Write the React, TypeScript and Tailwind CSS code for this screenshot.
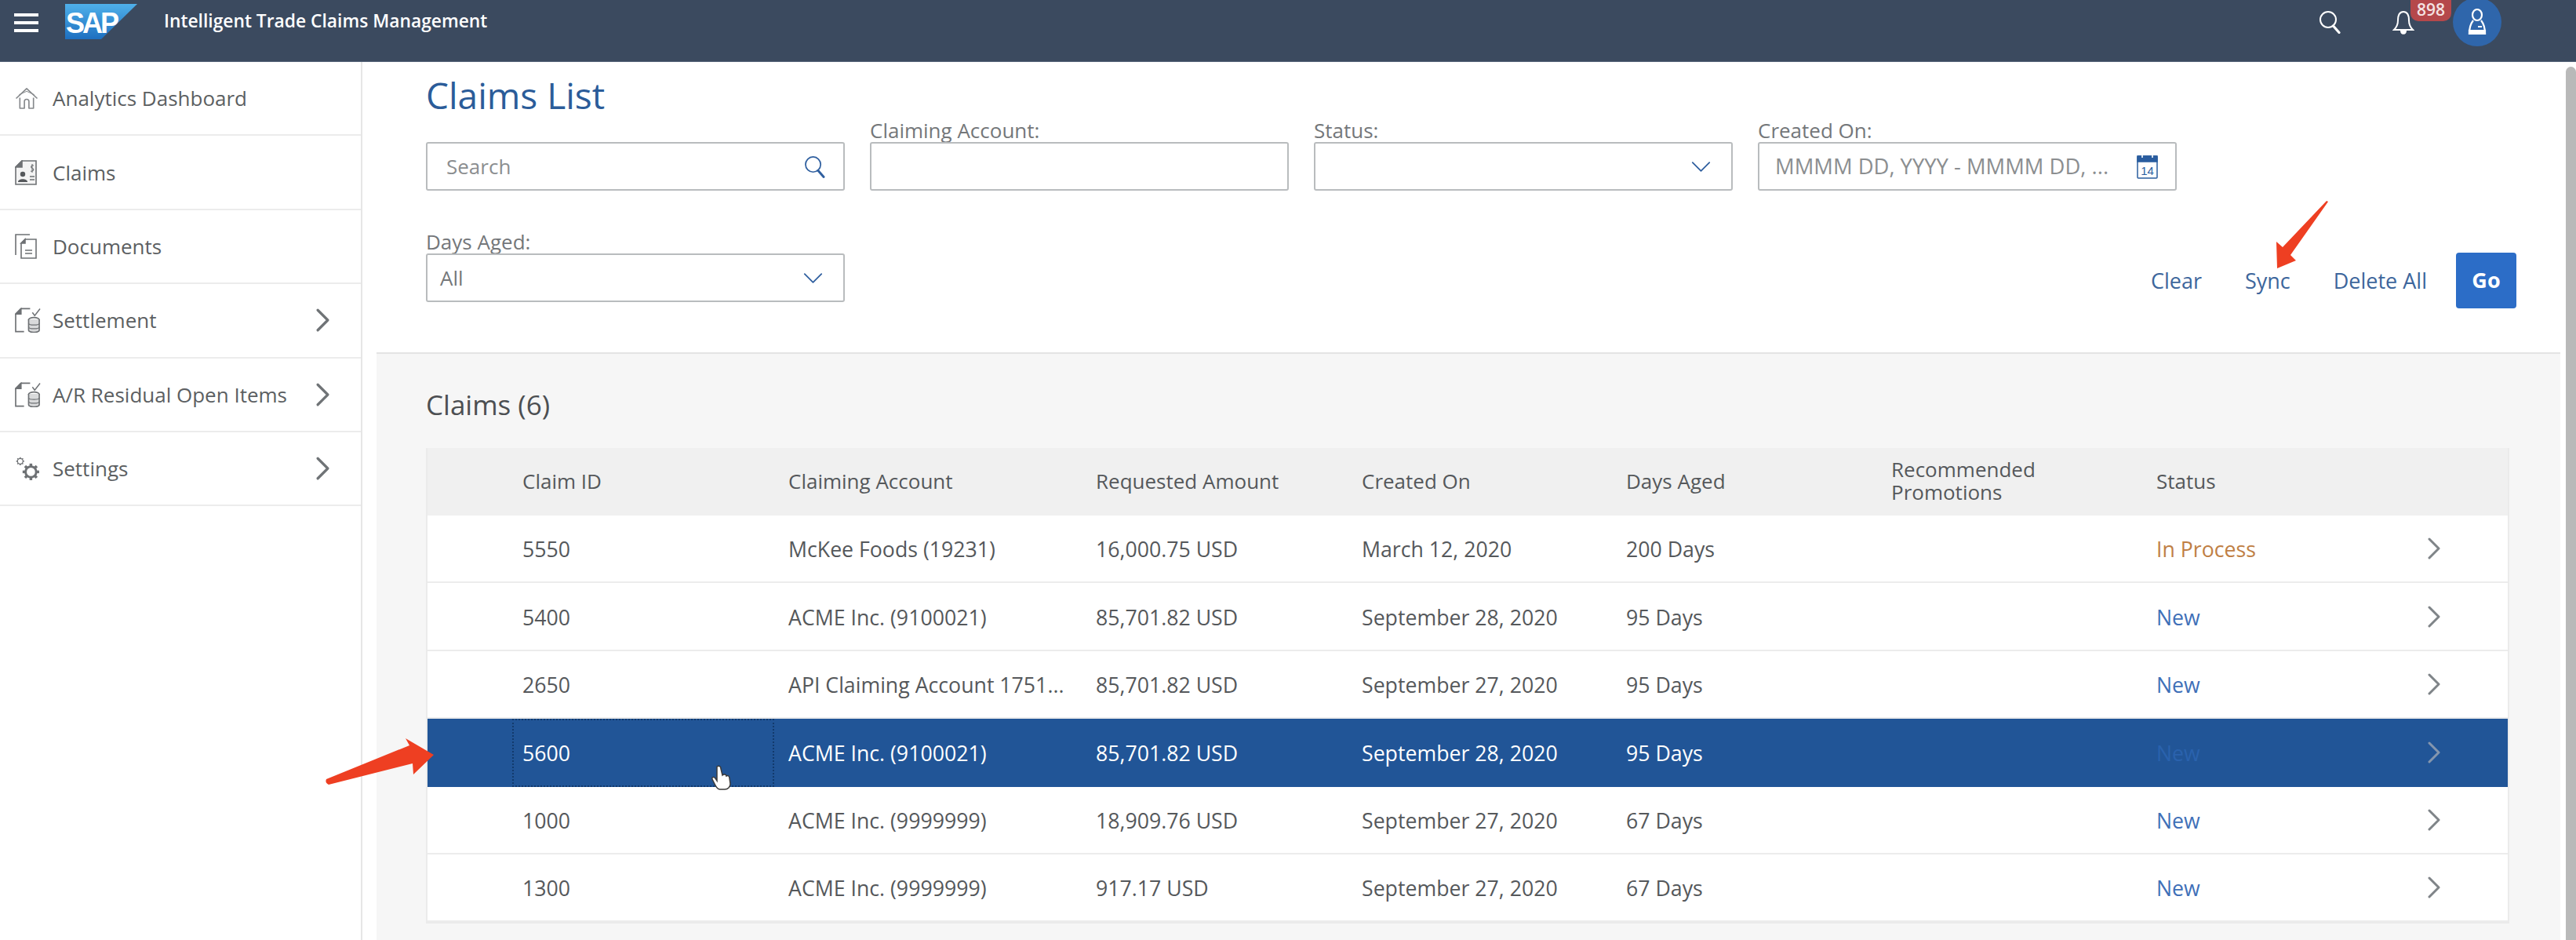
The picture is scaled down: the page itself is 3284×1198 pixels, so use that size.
import React from "react";

const Chevron = ({ className = "", color = "#6f7376" }: { className?: string; color?: string }) => (
  <svg viewBox="0 0 16 28" className={className} fill="none" stroke={color} strokeWidth="3" strokeLinecap="round" strokeLinejoin="round">
    <path d="M2 2 L14 14 L2 26" />
  </svg>
);

const Down = () => (
  <svg viewBox="0 0 28 16" className="w-[25px] h-[15px]" fill="none" stroke="#2f5f9f" strokeWidth="2" strokeLinecap="round" strokeLinejoin="round">
    <path d="M2 2 L14 14 L26 2" />
  </svg>
);

const HomeIcon = () => (
  <svg viewBox="0 0 30 28" className="w-[30px] h-[27px]" fill="none" stroke="#85888b" strokeWidth="1.700" strokeLinejoin="round">
    <path d="M1 14 L15 1 L29 14" />
    <path d="M5 9 L15 4.500 L25 9" strokeWidth="1" />
    <path d="M6 13 V27 H12 V18 A3 3 0 0 1 18 18 V27 H24 V13" />
  </svg>
);

const ClaimsIcon = () => (
  <svg viewBox="0 0 28 32" className="w-[28px] h-[32px]" fill="none" stroke="#6e7174" strokeWidth="1.600">
    <path d="M9 1 H27 V31 H1 V9 Z" fill="#f3f3f3" />
    <path d="M9 1 V9 H1 Z" fill="#6e7174" />
    <circle cx="10" cy="18" r="3.200" fill="#55585b" stroke="none" />
    <path d="M4 28 C4 23 16 23 16 28 Z" fill="#55585b" stroke="none" />
    <path d="M19 21 H25 M19 25 H25" strokeWidth="1.300" />
    <path d="M24 7 C20 6 20 10 22 10.500 C25 11 24 15 20 14 M22 5 V16" strokeWidth="1.100" />
  </svg>
);

const DocsIcon = () => (
  <svg viewBox="0 0 28 32" className="w-[28px] h-[32px]" fill="none" stroke="#6e7174" strokeWidth="1.600">
    <path d="M1 27 V1 H19" />
    <path d="M13 7 H27 V31 H8 V12 Z" fill="#fff" />
    <path d="M13 7 V12 H8 Z" fill="#6e7174" />
    <path d="M13 21 H22 M13 25 H22" strokeWidth="1.300" />
  </svg>
);

const SettleIcon = () => (
  <svg viewBox="0 0 34 32" className="w-[33px] h-[32px]" fill="none" stroke="#6e7174" strokeWidth="1.700">
    <path d="M8 1 H20 M8 1 L1 8 V31 H12" />
    <path d="M8 1 V8 H1 Z" fill="#6e7174" />
    <path d="M23 6 L26 10 L33 1" strokeWidth="1.500" />
    <ellipse cx="25" cy="15.500" rx="7" ry="3" fill="#fff" />
    <path d="M18 15 V29 C18 33 32 33 32 29 V15" fill="#d9dadb" />
    <path d="M18 20 C18 23 32 23 32 20 M18 25 C18 28 32 28 32 25" strokeWidth="1.300" />
  </svg>
);

const Gear = ({ cx, cy, r, w }: { cx: number; cy: number; r: number; w: number }) => (
  <g>
    <circle cx={cx} cy={cy} r={r} strokeWidth={w} />
    {[0, 45, 90, 135, 180, 225, 270, 315].map((a) => (
      <path
        key={a}
        d={`M${cx} ${cy - r} V${cy - r - w * 1.300}`}
        strokeWidth={w * 1.200}
        transform={`rotate(${a} ${cx} ${cy})`}
      />
    ))}
  </g>
);

const GearsIcon = () => (
  <svg viewBox="0 0 34 34" className="w-[33px] h-[33px]" fill="none" stroke="#6e7174">
    <Gear cx={7} cy={7} r={3.600} w={1.300} />
    <Gear cx={21} cy={21} r={7} w={3} />
  </svg>
);

const SearchGlyph = ({ className, color, w = 2 }: { className: string; color: string; w?: number }) => (
  <svg viewBox="0 0 28 30" className={className} fill="none" stroke={color} strokeWidth={w} strokeLinecap="round">
    <circle cx="12" cy="12" r="10" />
    <path d="M18.500 20 L26 28.500" strokeWidth={w + 1.200} />
  </svg>
);

const Nav = ({ icon, label, more }: { icon: React.ReactNode; label: string; more?: boolean }) => (
  <div className="h-[94.4px] border-b-2 border-[#ececec] flex items-center pl-[19px] pr-[40px] shrink-0">
    <div className="w-[48px] flex items-center">{icon}</div>
    <span className="text-[26px] text-[#5c5f62] flex-1 whitespace-nowrap pt-[1px]">{label}</span>
    {more && <Chevron className="w-[17px] h-[30px]" />}
  </div>
);

const Field = ({ label, children, cls = "" }: { label: string; children?: React.ReactNode; cls?: string }) => (
  <div className="w-[534px] shrink-0 flex flex-col">
    <div className="h-[30px] text-[26px] leading-[30px] text-[#74777a] whitespace-nowrap">{label}</div>
    <div className={`h-[62px] border-2 border-[#b9bcbe] rounded-[3px] bg-white flex items-center justify-between ${cls}`}>{children}</div>
  </div>
);

const Calendar = () => (
  <svg viewBox="0 0 27 32" className="w-[27px] h-[32px]" fill="none" stroke="#2a5d9f" strokeWidth="1.500">
    <rect x="1" y="3" width="25" height="28" rx="1" fill="#fff" />
    <rect x="1" y="3" width="25" height="7" fill="#2a5d9f" />
    <path d="M7 1 V5 M20 1 V5" stroke="#fff" strokeWidth="1.600" />
    <text x="13.500" y="26.500" textAnchor="middle" fontSize="15" fontFamily="'Liberation Sans', sans-serif" fill="#2a5d9f" stroke="none">14</text>
  </svg>
);

type Row = { id: string; acct: string; amt: string; date: string; days: string; status: string; sel?: boolean };
const rows: Row[] = [
  { id: "5550", acct: "McKee Foods (19231)", amt: "16,000.75 USD", date: "March 12, 2020", days: "200 Days", status: "In Process" },
  { id: "5400", acct: "ACME Inc. (9100021)", amt: "85,701.82 USD", date: "September 28, 2020", days: "95 Days", status: "New" },
  { id: "2650", acct: "API Claiming Account 1751...", amt: "85,701.82 USD", date: "September 27, 2020", days: "95 Days", status: "New" },
  { id: "5600", acct: "ACME Inc. (9100021)", amt: "85,701.82 USD", date: "September 28, 2020", days: "95 Days", status: "New", sel: true },
  { id: "1000", acct: "ACME Inc. (9999999)", amt: "18,909.76 USD", date: "September 27, 2020", days: "67 Days", status: "New" },
  { id: "1300", acct: "ACME Inc. (9999999)", amt: "917.17 USD", date: "September 27, 2020", days: "67 Days", status: "New" },
];

const grid = "grid grid-cols-[108px_352px_392px_339px_337px_338px_338px_300px_1fr] items-center";

const TableRow = ({ r }: { r: Row }) => {
  const cell = r.sel ? "text-white whitespace-nowrap pt-[2px]" : "text-[#55585b] whitespace-nowrap pt-[2px]";
  const status = `pt-[2px] ${r.sel ? "text-[#2a62ad]" : r.status === "New" ? "text-[#3f70b8]" : "text-[#c07f45]"}`;
  return (
    <div className={`${grid} h-[86.4px] text-[26.7px] ${r.sel ? "bg-[#215597]" : "bg-white border-b-2 border-[#ececec]"}`}>
      <div />
      <div className={`${cell} w-[334px] h-full flex items-center pl-[11px] ${r.sel ? "border-2 border-dotted border-[#123a6c]" : "border-2 border-transparent"}`}>{r.id}</div>
      <div className={cell}>{r.acct}</div>
      <div className={cell}>{r.amt}</div>
      <div className={cell}>{r.date}</div>
      <div className={cell}>{r.days}</div>
      <div />
      <div className={status}>{r.status}</div>
      <div className="flex justify-end pr-[86px]">
        <Chevron className="w-[16px] h-[28px]" color={r.sel ? "#8496ae" : "#7f8488"} />
      </div>
    </div>
  );
};

const Link = ({ children }: { children: React.ReactNode }) => (
  <span className="text-[27px] text-[#3d669c] whitespace-nowrap">{children}</span>
);

export default function App() {
  return (
    <div className="relative h-[1198px] w-[3284px] overflow-hidden bg-white flex flex-col font-['Open_Sans','Noto_Sans',sans-serif]">
      <header className="h-[79px] shrink-0 bg-[#3b4a5f] border-b border-[#56657a] flex items-start relative">
        <div className="ml-[18px] mt-[17px] w-[31px] flex flex-col gap-[6px]">
          <div className="h-[4px] bg-white" />
          <div className="h-[4px] bg-white" />
          <div className="h-[4px] bg-white" />
        </div>
        <svg viewBox="0 0 92 46" className="ml-[34px] mt-[4px] w-[92px] h-[46px]">
          <defs>
            <linearGradient id="sapg" x1="0" y1="0" x2="0" y2="1">
              <stop offset="0" stopColor="#4fb0ea" />
              <stop offset="1" stopColor="#1d6fc0" />
            </linearGradient>
          </defs>
          <path d="M0 1 H92 L46 46 H0 Z" fill="url(#sapg)" />
          <text x="1" y="38" fontSize="36" fontWeight="700" letterSpacing="-3" fontFamily="'Liberation Sans', sans-serif" fill="#fff">SAP</text>
        </svg>
        <span className="ml-[34px] mt-[10px] text-[22.8px] leading-[34px] font-semibold text-white whitespace-nowrap">Intelligent Trade Claims Management</span>
        <SearchGlyph className="absolute left-[2955px] top-[13px] w-[30px] h-[30px]" color="#ffffff" />
        <svg viewBox="0 0 28 32" className="absolute left-[3050px] top-[12px] w-[28px] h-[32px]" fill="none" stroke="#fff" strokeWidth="2">
          <path d="M14 3 C8 3 7 8 7 14 C7 20 5 23 2 26 H26 C23 23 21 20 21 14 C21 8 20 3 14 3 Z" />
          <path d="M11 27 C11 32 17 32 17 27 Z" fill="#fff" />
        </svg>
        <div className="absolute left-[3073px] top-0 w-[52px] h-[27px] rounded-b-[10px] bg-[#b5484b] text-[#f4e3e3] text-[21px] leading-[25px] font-semibold text-center">898</div>
        <div className="absolute left-[3127px] top-[-3px] w-[62px] h-[62px] rounded-full bg-[#2f66ab] flex items-center justify-center">
          <svg viewBox="0 0 24 34" className="w-[24px] h-[34px]" fill="none" stroke="#fff" strokeWidth="2.200">
            <ellipse cx="12" cy="8" rx="6" ry="7" />
            <path d="M7 15 C3 20 2 26 2 32 H22 C22 26 21 20 17 15" />
            <path d="M2 28 H22 V32 H2 Z" fill="#fff" />
            <path d="M13 23 H18" strokeWidth="2" />
          </svg>
        </div>
      </header>

      <div className="flex-1 flex min-h-0">
        <aside className="w-[462px] shrink-0 border-r-2 border-[#e6e6e6] flex flex-col">
          <Nav icon={<HomeIcon />} label="Analytics Dashboard" />
          <Nav icon={<ClaimsIcon />} label="Claims" />
          <Nav icon={<DocsIcon />} label="Documents" />
          <Nav icon={<SettleIcon />} label="Settlement" more />
          <Nav icon={<SettleIcon />} label="A/R Residual Open Items" more />
          <Nav icon={<GearsIcon />} label="Settings" more />
        </aside>

        <main className="flex-1 flex flex-col pl-[18px] min-w-0">
          <section className="h-[370px] shrink-0 pl-[63px] pr-[56px] flex flex-col">
            <h1 className="h-[72px] pt-[12px] text-[46px] leading-[60px] text-[#2b5c99] whitespace-nowrap">Claims List</h1>
            <div className="h-[92px] flex gap-[32px] shrink-0">
              <Field label="" cls="pl-[24px] pr-[23px]">
                <span className="text-[26px] text-[#8b8e90]">Search</span>
                <SearchGlyph className="w-[27px] h-[29px]" color="#2f5f9f" w={1.800} />
              </Field>
              <Field label="Claiming Account:" />
              <Field label="Status:" cls="justify-end pr-[26px]"><Down /></Field>
              <Field label="Created On:" cls="pl-[20px] pr-[22px]">
                <span className="text-[27.4px] text-[#8b8e90] whitespace-nowrap">MMMM DD, YYYY - MMMM DD, ...</span>
                <Calendar />
              </Field>
            </div>
            <div className="mt-[50px] flex items-start justify-between">
              <Field label="Days Aged:" cls="pl-[16px] pr-[26px]">
                <span className="text-[26px] text-[#74777a]">All</span>
                <Down />
              </Field>
              <div className="flex items-center h-[71px] mt-[29px]">
                <span className="pt-[2px]"><Link>Clear</Link></span>
                <span className="ml-[55px] pt-[2px]"><Link>Sync</Link></span>
                <span className="ml-[55px] pt-[2px]"><Link>Delete All</Link></span>
                <div className="ml-[37px] w-[77px] h-[71px] rounded-[4px] bg-[#2c6dc7] text-white text-[27px] font-bold flex items-center justify-center">Go</div>
              </div>
            </div>
          </section>

          <section className="flex-1 bg-[#f6f6f6] border-t-2 border-[#e4e4e4] pl-[63px] pr-[65px] flex flex-col min-h-0">
            <h2 className="h-[120px] shrink-0 pt-[43px] text-[35px] leading-[44px] text-[#4c4f52] whitespace-nowrap">Claims (6)</h2>
            <div className="border-2 border-t-0 border-[#ebebeb] w-[2656px]">
              <div className={`${grid} h-[86px] bg-[#f0f0f0] text-[26px] text-[#55585b] leading-[29px]`}>
                <div />
                <div className="pl-[13px] pb-[2px]">Claim ID</div>
                <div className="pb-[2px]">Claiming Account</div>
                <div className="pb-[2px]">Requested Amount</div>
                <div className="pb-[2px]">Created On</div>
                <div className="pb-[2px]">Days Aged</div>
                <div className="pr-[60px] pb-[2px]">Recommended Promotions</div>
                <div className="pb-[2px]">Status</div>
                <div />
              </div>
              {rows.map((r) => (
                <TableRow key={r.id} r={r} />
              ))}
            </div>
          </section>
        </main>

        <div className="w-[20px] shrink-0 pt-[6px] pl-[7px]">
          <div className="h-full bg-[#b9b9b9] rounded-t-[8px]" />
        </div>
      </div>

      <svg className="absolute left-0 top-0 w-[3284px] h-[1198px] pointer-events-none" viewBox="0 0 3284 1198">
        <path d="M416 993 L522 950 L517 941 L553 962 L527 987 L526 973 L419 1000 Q414 998 416 993 Z" fill="#ee3f22" />
        <path d="M2968 257 L2920 325 L2927 332 L2903 342 L2902 308 L2910 315 L2966 256 Z" fill="#ee3f22" />
        <path
          d="M914 977 C917 975 919 977 919 980 L921 988 C923 986 926 987 926 989 C928 988 930 989 930 992 L931 999 C931 1003 928 1006 924 1006 L918 1006 C915 1006 914 1004 912 1001 L908 993 C907 991 910 989 912 992 L914 995 Z"
          fill="#fff"
          stroke="#3b3b3b"
          strokeWidth="1.500"
        />
      </svg>
    </div>
  );
}
